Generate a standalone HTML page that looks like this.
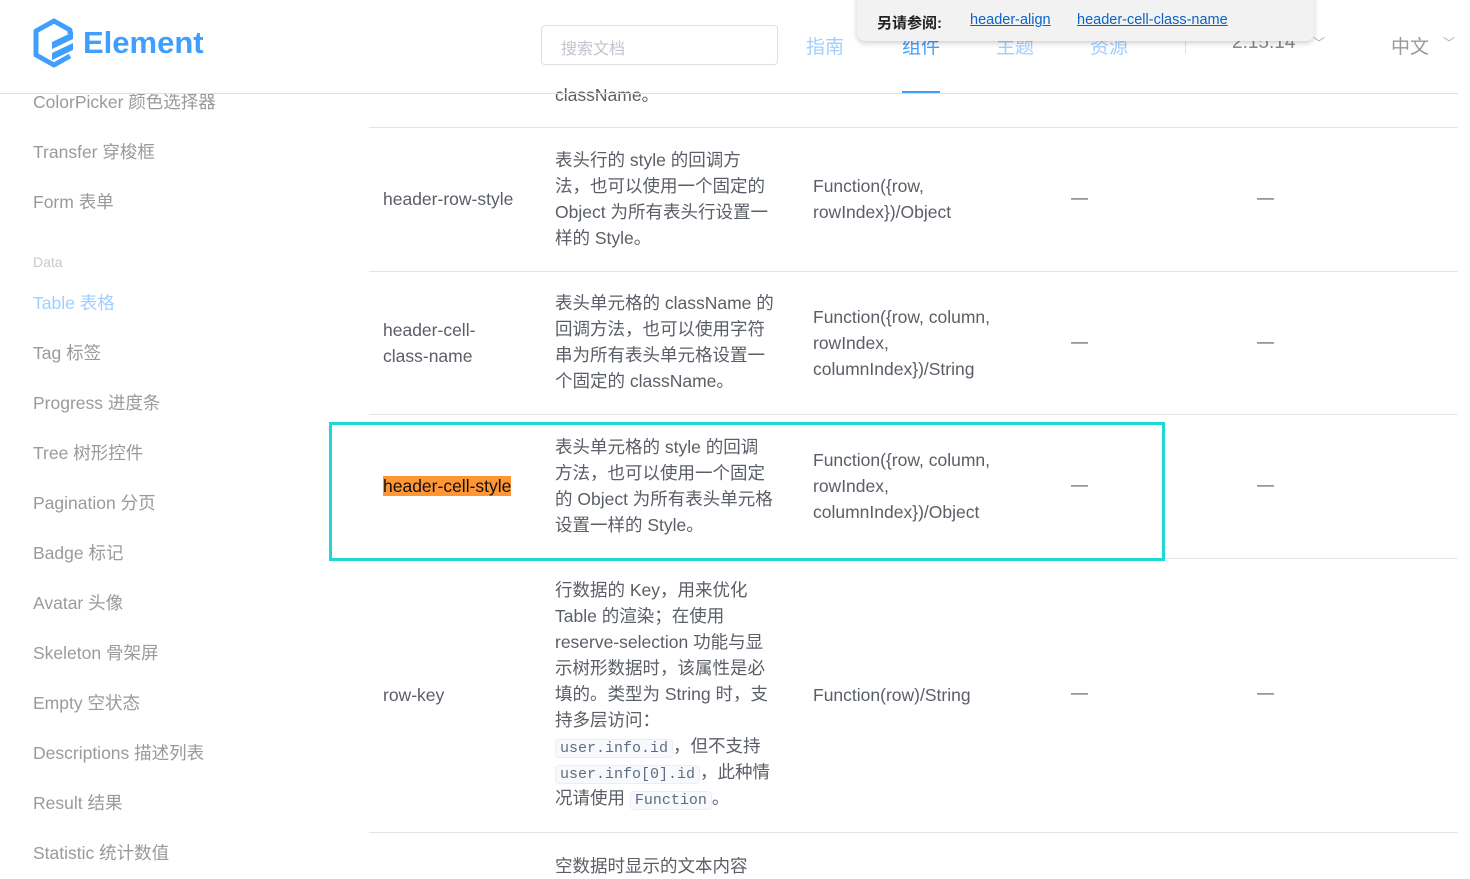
<!DOCTYPE html>
<html><head><meta charset="utf-8">
<style>
*{margin:0;padding:0;box-sizing:border-box}
body{width:1470px;height:865px;overflow:hidden;background:#fff;font-family:"Liberation Sans","Noto Sans CJK SC",sans-serif;position:relative}
.a{position:absolute;white-space:nowrap}
.side{left:33px;font-size:17.5px;color:#9a9a9a}
.t{font-size:17.5px;color:#5a5e66;line-height:26px}
.line{position:absolute;left:369px;right:12px;height:1px;background:#e3e5ea}
code{font-family:"Liberation Mono","Noto Sans CJK SC",monospace;font-size:15px;line-height:1;background:#f8f9fc;border:1px solid #eaeefb;border-radius:4px;padding:0 4px;color:#5e6d82}
.dash{font-size:17px;color:#5a5e66}
</style></head><body>

<!-- sidebar -->
<div class="a side" style="top:89px">ColorPicker 颜色选择器</div>
<div class="a side" style="top:139px">Transfer 穿梭框</div>
<div class="a side" style="top:189px">Form 表单</div>
<div class="a" style="left:33px;top:254px;font-size:14px;color:#c8c8c8">Data</div>
<div class="a side" style="top:290px;color:#a0cfff">Table 表格</div>
<div class="a side" style="top:340px">Tag 标签</div>
<div class="a side" style="top:390px">Progress 进度条</div>
<div class="a side" style="top:440px">Tree 树形控件</div>
<div class="a side" style="top:490px">Pagination 分页</div>
<div class="a side" style="top:540px">Badge 标记</div>
<div class="a side" style="top:590px">Avatar 头像</div>
<div class="a side" style="top:640px">Skeleton 骨架屏</div>
<div class="a side" style="top:690px">Empty 空状态</div>
<div class="a side" style="top:740px">Descriptions 描述列表</div>
<div class="a side" style="top:790px">Result 结果</div>
<div class="a side" style="top:840px">Statistic 统计数值</div>

<!-- table -->
<div class="a t" style="left:555px;top:82px">className。</div>
<div class="line" style="top:127px"></div>
<div class="a t" style="left:383px;top:186px">header-row-style</div>
<div class="a t" style="left:555px;top:147px">表头行的 style 的回调方<br>法，也可以使用一个固定的<br>Object 为所有表头行设置一<br>样的 Style。</div>
<div class="a t" style="left:813px;top:173px">Function({row,<br>rowIndex})/Object</div>
<div class="a dash" style="left:1071px;top:188px">—</div>
<div class="a dash" style="left:1257px;top:188px">—</div>
<div class="line" style="top:271px"></div>
<div class="a t" style="left:383px;top:317px">header-cell-<br>class-name</div>
<div class="a t" style="left:555px;top:290px">表头单元格的 className 的<br>回调方法，也可以使用字符<br>串为所有表头单元格设置一<br>个固定的 className。</div>
<div class="a t" style="left:813px;top:304px">Function({row, column,<br>rowIndex,<br>columnIndex})/String</div>
<div class="a dash" style="left:1071px;top:332px">—</div>
<div class="a dash" style="left:1257px;top:332px">—</div>
<div class="line" style="top:414px"></div>
<div class="a t" style="left:383px;top:473px"><span style="background:#ff9533;color:#111">header-cell-style</span></div>
<div class="a t" style="left:555px;top:434px">表头单元格的 style 的回调<br>方法，也可以使用一个固定<br>的 Object 为所有表头单元格<br>设置一样的 Style。</div>
<div class="a t" style="left:813px;top:447px">Function({row, column,<br>rowIndex,<br>columnIndex})/Object</div>
<div class="a dash" style="left:1071px;top:475px">—</div>
<div class="a dash" style="left:1257px;top:475px">—</div>
<div class="line" style="top:558px"></div>
<div style="position:absolute;left:329px;top:422px;width:836px;height:139px;border:3px solid #1ed7d7"></div>
<div class="a t" style="left:383px;top:682px">row-key</div>
<div class="a t" style="left:555px;top:577px">行数据的 Key，用来优化<br>Table 的渲染；在使用<br>reserve-selection 功能与显<br>示树形数据时，该属性是必<br>填的。类型为 String 时，支<br>持多层访问：<br><code>user.info.id</code>，但不支持<br><code>user.info[0].id</code>，此种情<br>况请使用 <code>Function</code>。</div>
<div class="a t" style="left:813px;top:682px">Function(row)/String</div>
<div class="a dash" style="left:1071px;top:683px">—</div>
<div class="a dash" style="left:1257px;top:683px">—</div>
<div class="line" style="top:832px"></div>
<div class="a t" style="left:555px;top:853px">空数据时显示的文本内容</div>

<!-- header -->
<div style="position:absolute;left:0;top:0;width:1470px;height:80px;background:rgba(255,255,255,.75)"></div>
<div style="position:absolute;left:0;top:93px;width:1458px;height:1px;background:#dcdfe6"></div>
<svg class="a" style="left:30px;top:18px" width="50" height="52" viewBox="0 0 50 52">
<path d="M40 16 L40 12 L24 3 L6 13 L6 37 L24 47 L40 38" fill="none" stroke="#409eff" stroke-width="5" stroke-linejoin="round"/>
<path d="M22 24 L43 14 L43 21 L22 31 Z M22 35 L43 25 L43 32 L22 42 Z" fill="#409eff"/>
</svg>
<div class="a" style="left:83px;top:25px;font-size:31px;font-weight:bold;color:#409eff">Element</div>
<div style="position:absolute;left:541px;top:25px;width:237px;height:40px;border:1px solid #dcdfe6;border-radius:4px"></div>
<div class="a" style="left:561px;top:35px;font-size:16px;color:#c0c4cc">搜索文档</div>
<div class="a" style="left:806px;top:32px;font-size:19px;color:#a0cfff">指南</div>
<div class="a" style="left:902px;top:32px;font-size:19px;color:#409eff">组件</div>
<div style="position:absolute;left:902px;top:91px;width:38px;height:2px;background:#409eff"></div>
<div class="a" style="left:996px;top:32px;font-size:19px;color:#a0cfff">主题</div>
<div class="a" style="left:1090px;top:32px;font-size:19px;color:#a0cfff">资源</div>
<div style="position:absolute;left:1185px;top:36px;width:1px;height:18px;background:#dcdfe6"></div>
<div class="a" style="left:1232px;top:32px;font-size:19px;color:#888">2.15.14</div>
<div class="a" style="left:1313px;top:34px;font-size:12px;color:#aaa">﹀</div>
<div class="a" style="left:1391px;top:32px;font-size:19px;color:#999">中文</div>
<div class="a" style="left:1443px;top:34px;font-size:12px;color:#aaa">﹀</div>

<!-- tooltip -->
<div style="position:absolute;left:857px;top:-5px;width:457px;height:46px;background:#f2f2f2;border-radius:0 0 8px 8px;box-shadow:0 2px 6px rgba(0,0,0,.2)"></div>
<div class="a" style="left:877px;top:12px;font-size:15px;font-weight:bold;color:#222">另请参阅:</div>
<div class="a" style="left:970px;top:12px;font-size:14.5px;color:#0a64c8;text-decoration:underline">header-align</div>
<div class="a" style="left:1077px;top:12px;font-size:14.5px;color:#0a64c8;text-decoration:underline">header-cell-class-name</div>
</body></html>
